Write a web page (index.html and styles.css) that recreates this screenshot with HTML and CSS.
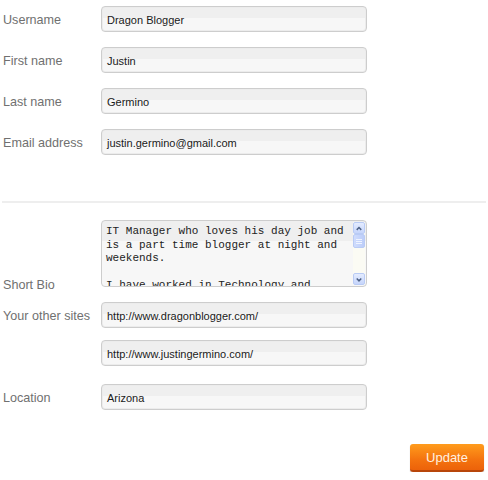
FILE: index.html
```html
<!DOCTYPE html>
<html>
<head>
<meta charset="utf-8">
<link rel="stylesheet" href="styles.css">
</head>
<body>
<form class="profile">
  <div class="row r-user"><label class="lbl">Username</label><div class="field">Dragon Blogger</div></div>
  <div class="row r-std"><label class="lbl">First name</label><div class="field">Justin</div></div>
  <div class="row r-std"><label class="lbl">Last name</label><div class="field">Germino</div></div>
  <div class="row r-std"><label class="lbl">Email address</label><div class="field">justin.germino@gmail.com</div></div>
  <hr class="divider">
  <div class="row r-bio">
    <label class="lbl lbl-bottom">Short Bio</label>
    <div class="tarea">
      <div class="tarea-text">IT Manager who loves his day job and<br>is a part time blogger at night and<br>weekends.<br><br>I have worked in Technology and</div>
      <div class="sbar">
        <div class="sbtn"><svg width="11" height="11" viewBox="0 0 11 11"><path d="M3 7 L5.5 4.5 L8 7" fill="none" stroke="#4d6185" stroke-width="1.6"/></svg></div>
        <div class="thumb"><span></span><span></span><span></span></div>
        <div class="track"></div>
        <div class="sbtn"><svg width="11" height="11" viewBox="0 0 11 11"><path d="M3 4.5 L5.5 7 L8 4.5" fill="none" stroke="#4d6185" stroke-width="1.6"/></svg></div>
      </div>
    </div>
  </div>
  <div class="row r-sites"><label class="lbl">Your other sites</label><div class="field">http://www.dragonblogger.com/</div></div>
  <div class="row r-sites2"><label class="lbl"></label><div class="field">http://www.justingermino.com/</div></div>
  <div class="row r-loc"><label class="lbl">Location</label><div class="field">Arizona</div></div>
  <div class="actions"><button type="button" class="btn">Update</button></div>
</form>
</body>
</html>
```

FILE: styles.css
```css
html, body {
  margin: 0;
  padding: 0;
  background: #fff;
}
.profile {
  width: 484px;
  padding: 0 2px;
  font-family: "Liberation Sans", Arial, sans-serif;
}
.row {
  display: flex;
  align-items: center;
}
.r-user { margin-top: 6px; }
.r-std { margin-top: 15px; }
.r-bio { margin-top: 17px; align-items: flex-end; }
.r-sites { margin-top: 15px; }
.r-sites2 { margin-top: 12px; }
.r-loc { margin-top: 18px; }
.lbl {
  width: 99px;
  padding: 2px 0 0 1px;
  box-sizing: border-box;
  font-size: 12.6px;
  color: #707070;
  line-height: 16px;
}
.lbl-bottom { margin-bottom: -6px; }
.field {
  width: 266px;
  height: 26px;
  box-sizing: border-box;
  border: 1px solid #cdcdcd;
  border-radius: 4px;
  box-shadow: 0 0 0 1px #ececec inset;
  background: linear-gradient(#efefef 0, #efefef 11px, #f7f7f7 11px, #f7f7f7 100%);
  font-size: 11px;
  color: #1a1a1a;
  padding: 1px 5px 0;
  line-height: 24px;
  white-space: nowrap;
  overflow: hidden;
}
.divider {
  margin: 46px 0 0 0;
  border: 0;
  height: 2px;
  background: #eeeeee;
}
.tarea {
  width: 266px;
  height: 67px;
  box-sizing: border-box;
  border: 1px solid #cdcdcd;
  border-radius: 4px;
  background: linear-gradient(#efefef 0, #efefef 20px, #f7f7f7 20px);
  display: flex;
  overflow: hidden;
}
.tarea-text {
  flex: 1;
  padding: 4px 0 0 4px;
  font-family: "Liberation Mono", "Courier New", monospace;
  font-size: 11px;
  line-height: 13.5px;
  color: #222;
  white-space: nowrap;
  overflow: hidden;
}
.sbar {
  width: 12px;
  margin: 1px 1px 1px 0;
  display: flex;
  flex-direction: column;
  background: #fbfbf4;
}
.sbtn {
  width: 12px;
  height: 12px;
  box-sizing: border-box;
  border: 1px solid #b9cbf5;
  border-radius: 2px;
  background: linear-gradient(#e4ecff, #c6d5fb);
  display: flex;
  align-items: center;
  justify-content: center;
}
.sbtn svg { display: block; }
.thumb {
  height: 14px;
  box-sizing: border-box;
  border: 1px solid #b9cbf5;
  border-radius: 2px;
  background: linear-gradient(90deg, #cfdcfd, #bccdf9);
  display: flex;
  flex-direction: column;
  align-items: center;
  justify-content: center;
  gap: 1px;
}
.thumb span {
  width: 6px;
  height: 1px;
  background: #eef3ff;
}
.track { flex: 1; }
.actions {
  display: flex;
  justify-content: flex-end;
  margin-top: 34px;
  padding-right: 2px;
}
.btn {
  width: 74px;
  height: 28px;
  border: 0;
  border-bottom: 2px solid #b8460a;
  border-radius: 3px;
  background: linear-gradient(#ff9c1c, #f4730f 60%, #ec620a);
  color: #fff1e0;
  font-family: "Liberation Sans", Arial, sans-serif;
  font-size: 13px;
  padding: 0;
  box-shadow: 0 1px 1px rgba(0,0,0,0.25);
}
```
